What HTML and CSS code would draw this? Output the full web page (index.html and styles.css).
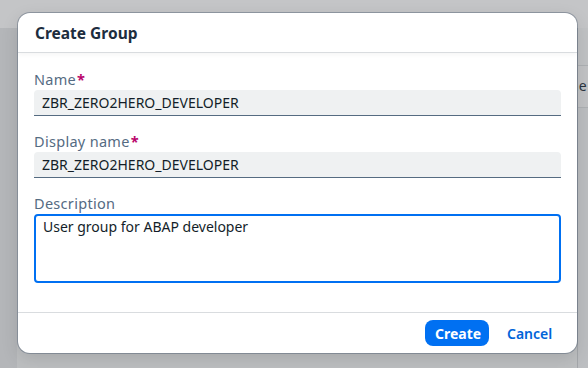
FILE: index.html
```html
<!DOCTYPE html>
<html lang="en">
<head>
    <meta charset="UTF-8">
    <title>Create Group</title>
    <link rel="stylesheet" href="styles.css">
</head>
<body>
    <div class="shell">
        <div class="shell-bar"></div>
        <div class="shell-body">
            <div class="side"></div>
            <div class="main"></div>
            <div class="table-edge">
                <div class="edge-head"></div>
                <div class="edge-row">ne</div>
                <div class="edge-rest"></div>
            </div>
        </div>
    </div>

    <div class="dialog">
        <div class="dialog-header">Create Group</div>
        <div class="dialog-content">
            <div class="field">
                <label class="field-label">Name<span class="req">*</span></label>
                <div class="input">ZBR_ZERO2HERO_DEVELOPER</div>
            </div>
            <div class="field">
                <label class="field-label">Display name<span class="req">*</span></label>
                <div class="input">ZBR_ZERO2HERO_DEVELOPER</div>
            </div>
            <div class="field">
                <label class="field-label">Description</label>
                <div class="textarea">User group for ABAP developer</div>
            </div>
        </div>
        <div class="dialog-footer">
            <button class="btn btn-emph">Create</button>
            <button class="btn btn-trans">Cancel</button>
        </div>
    </div>
</body>
</html>
```

FILE: styles.css
```css
body {
    margin: 0;
    width: 588px;
    height: 368px;
    overflow: hidden;
    font-family: 'Noto Sans', 'Liberation Sans', sans-serif;
    background: #b5b7ba;
}
.shell {
    display: flex;
    flex-direction: column;
    height: 100%;
}
.shell-bar {
    height: 28px;
    background: #c4c5c7;
    flex: none;
}
.shell-body {
    flex: 1;
    display: flex;
}
.side {
    width: 17px;
    background: #b4b6b9;
}
.main {
    flex: 1;
    background: #bdbfc1;
}
.table-edge {
    width: 10px;
    border-left: 1px solid #a4a7ab;
    display: flex;
    flex-direction: column;
    background: #bcbec1;
}
.edge-head {
    height: 37px;
    border-bottom: 1px solid #aeb1b4;
    background: #c0c2c4;
}
.edge-row {
    height: 41px;
    border-bottom: 1px solid #aeb1b4;
    font-size: 14px;
    line-height: 40px;
    color: #2b3540;
    text-indent: -8px;
    overflow: hidden;
    white-space: nowrap;
    background: #c2c3c5;
}
.edge-rest {
    flex: 1;
}

/* dialog sits over the dimmed page */
.dialog {
    position: absolute;
    left: 18px;
    top: 13px;
    width: 559px;
    height: 340px;
    background: #fff;
    border-radius: 12px;
    box-shadow: 0 0 0 1px rgba(80, 95, 115, 0.45), 0 6px 18px rgba(0, 0, 0, 0.12);
    display: flex;
    flex-direction: column;
    overflow: hidden;
}
.dialog-header {
    height: 39px;
    padding-left: 17px;
    font-size: 15.5px;
    font-weight: 700;
    line-height: 40px;
    color: #1d2d3e;
    border-bottom: 1px solid #d9dcdf;
    box-shadow: 0 2px 4px rgba(0, 0, 0, 0.04);
}
.dialog-content {
    flex: 1;
    padding: 17px 16px 0 16px;
    display: flex;
    flex-direction: column;
    gap: 16px;
}
.field {
    display: flex;
    flex-direction: column;
    gap: 2px;
}
.field-label {
    font-size: 14.5px;
    letter-spacing: 0.3px;
    line-height: 18px;
    color: #556b82;
}
.req {
    color: #ba066c;
    font-weight: 700;
    margin-left: 1px;
}
.input {
    height: 25px;
    background: #eff1f2;
    border-bottom: 1px solid #556b81;
    border-radius: 4px 4px 0 0;
    padding: 0 8px;
    font-size: 14px;
    line-height: 25px;
    color: #131e29;
}
.textarea {
    height: 61px;
    border: 2px solid #0070f2;
    border-radius: 4px;
    padding: 2px 7px;
    font-size: 14px;
    line-height: 18px;
    color: #131e29;
}
.dialog-footer {
    height: 40px;
    border-top: 1px solid #d9dcdf;
    display: flex;
    justify-content: flex-end;
    align-items: center;
    gap: 8px;
    padding-right: 20px;
}
.btn {
    font-family: inherit;
    font-size: 14px;
    font-weight: 700;
    height: 26px;
    border: none;
    border-radius: 8px;
    padding: 0 10px;
    cursor: pointer;
}
.btn-emph {
    background: #0070f2;
    color: #fff;
    width: 64px;
}
.btn-trans {
    background: none;
    color: #0064d9;
    font-weight: 600;
    width: 60px;
}
```
